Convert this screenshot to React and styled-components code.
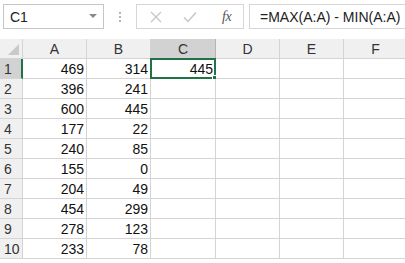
import React from 'react'
import styled, { createGlobalStyle } from 'styled-components'

const GlobalStyle = createGlobalStyle`
  html, body { margin: 0; padding: 0; background: #fff; }
  body { font-family: "Liberation Sans", Arial, sans-serif; overflow: hidden; }
  * { box-sizing: border-box; }
`

const GREEN = '#217346'
const GRID = '#d4d4d4'

const colWidths = [64, 64, 65, 64, 64, 64]
const cols = ['A', 'B', 'C', 'D', 'E', 'F']
const data = [
  [469, 314], [396, 241], [600, 445], [177, 22], [240, 85],
  [155, 0], [204, 49], [454, 299], [278, 123], [233, 78],
]

const App = () => (
  <Page>
    <GlobalStyle />
    <FormulaBar>
      <NameBox>
        <span>C1</span>
        <Caret />
      </NameBox>
      <Grip><i /><i /><i /></Grip>
      <ActionBox>
        <ActionIcon>
          <svg width="12" height="12" viewBox="0 0 12 12">
            <path d="M1 1 L11 11 M11 1 L1 11" stroke="#c6c6c6" strokeWidth="1.3" fill="none" />
          </svg>
        </ActionIcon>
        <ActionIcon>
          <svg width="14" height="12" viewBox="0 0 14 12">
            <path d="M1 6.5 L5 10.5 L13 1.5" stroke="#c6c6c6" strokeWidth="1.5" fill="none" />
          </svg>
        </ActionIcon>
        <Fx>fx</Fx>
      </ActionBox>
      <FormulaInput>=MAX(A:A) - MIN(A:A)</FormulaInput>
    </FormulaBar>

    <Sheet>
      <HeaderRow>
        <Corner><Tri /></Corner>
        {cols.map((c, i) => (
          <ColHead key={c} $w={colWidths[i]} $active={c === 'C'}>{c}</ColHead>
        ))}
        <ColHead $fill />
      </HeaderRow>
      {data.map((row, r) => (
        <Row key={r}>
          <RowHead $active={r === 0}>{r + 1}</RowHead>
          {cols.map((c, i) => {
            let v = ''
            if (i === 0) v = row[0]
            if (i === 1) v = row[1]
            if (i === 2 && r === 0) v = 445
            const sel = r === 0 && i === 2
            return (
              <Cell key={c} $w={colWidths[i]}>
                {v}
                {sel && <Selection><Handle /></Selection>}
              </Cell>
            )
          })}
          <Cell $fill />
        </Row>
      ))}
    </Sheet>
  </Page>
)

const Page = styled.div`
  width: 405px; height: 263px; overflow: hidden; background: #fff;
`

const FormulaBar = styled.div`
  height: 39px; display: flex; align-items: flex-start;
  padding: 4px 0 0 3px; background: #fff;
`

const NameBox = styled.div`
  width: 101px; height: 25px; border: 1px solid #c6c6c6; background: #fff;
  display: flex; align-items: center; justify-content: space-between;
  padding: 0 6px 0 6px; font-size: 14px; color: #222;
`

const Caret = styled.span`
  width: 0; height: 0;
  border-left: 4px solid transparent; border-right: 4px solid transparent;
  border-top: 4px solid #8a8a8a; margin-bottom: 2px;
`

const Grip = styled.div`
  width: 32px; height: 25px; display: flex; flex-direction: column;
  align-items: center; justify-content: center; gap: 2px;
  i { width: 2px; height: 2px; background: #b5b5b5; display: block; }
`

const ActionBox = styled.div`
  width: 108px; height: 25px; border: 1px solid #d6d6d6; background: #fff;
  display: flex; align-items: center; padding-left: 13px;
`

const ActionIcon = styled.span`
  width: 33px; display: flex; align-items: center;
`

const Fx = styled.span`
  font-family: "Liberation Serif", "Times New Roman", serif; font-style: italic;
  font-size: 14px; color: #555; margin-left: 6px; letter-spacing: -0.5px;
`

const FormulaInput = styled.div`
  flex: 1; height: 25px; margin-left: 5px; border: 1px solid #d6d6d6;
  border-right: none; background: #fff; font-size: 14px; color: #222;
  display: flex; align-items: center; padding-left: 10px; white-space: nowrap;
`

const Sheet = styled.div`
  display: flex; flex-direction: column;
`

const HeaderRow = styled.div`
  display: flex; height: 20px;
`

const Row = styled.div`
  display: flex; height: 20px;
`

const Corner = styled.div`
  width: 23px; flex: none; background: #f0f0f0;
  border-right: 1px solid ${GRID}; border-bottom: 1px solid ${GRID};
  display: flex; align-items: flex-end; justify-content: flex-end; padding: 0 3px 3px 0;
`

const Tri = styled.span`
  width: 0; height: 0;
  border-left: 11px solid transparent; border-bottom: 11px solid #c9c9c9;
`

const ColHead = styled.div`
  width: ${p => (p.$fill ? 'auto' : p.$w + 'px')}; flex: ${p => (p.$fill ? 1 : 'none')};
  background: ${p => (p.$active ? '#d2d2d2' : '#f0f0f0')};
  border-right: 1px solid ${p => (p.$active ? '#b4b4b4' : GRID)};
  border-bottom: 1px solid ${GRID};
  color: #333; font-size: 14px;
  display: flex; align-items: center; justify-content: center;
`

const RowHead = styled.div`
  width: 23px; flex: none;
  background: ${p => (p.$active ? '#d2d2d2' : '#f0f0f0')};
  border-right: ${p => (p.$active ? `2px solid ${GREEN}` : `1px solid ${GRID}`)};
  border-bottom: 1px solid ${GRID};
  color: #333; font-size: 14px; padding-left: 4px;
  display: flex; align-items: center;
`

const Cell = styled.div`
  width: ${p => (p.$fill ? 'auto' : p.$w + 'px')}; flex: ${p => (p.$fill ? 1 : 'none')};
  position: relative; background: #fff;
  border-right: 1px solid ${GRID}; border-bottom: 1px solid ${GRID};
  font-size: 14px; color: #111;
  display: flex; align-items: center; justify-content: flex-end; padding-right: 2px;
`

const Selection = styled.div`
  position: absolute; left: -1px; top: -1px; right: -1px; bottom: -1px;
  border: 2px solid ${GREEN};
`

const Handle = styled.span`
  position: absolute; right: -4px; bottom: -4px; width: 6px; height: 6px;
  background: ${GREEN}; border: 1px solid #fff;
`

export default App
